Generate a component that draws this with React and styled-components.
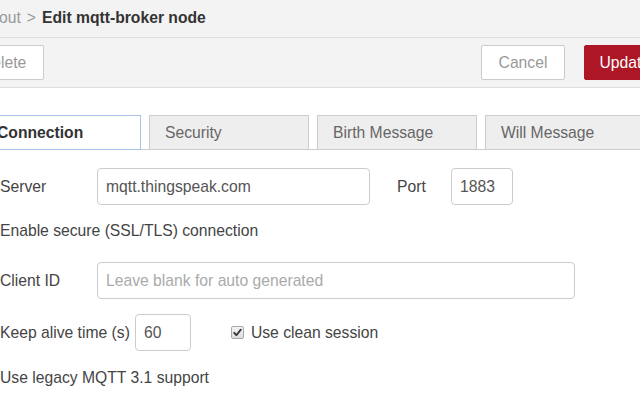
import React from 'react';
import styled, { createGlobalStyle } from 'styled-components';

const GlobalStyle = createGlobalStyle`
    html, body {
        margin: 0;
        padding: 0;
        background: #ffffff;
    }
    body {
        width: 640px;
        height: 400px;
        overflow: hidden;
        font-family: "Liberation Sans", Arial, Helvetica, sans-serif;
        font-size: 15.7px;
        color: #444;
    }
`;

const Tray = styled.div`
    width: 640px;
    height: 400px;
    overflow: hidden;
    display: flex;
    flex-direction: column;
`;

const Header = styled.div`
    height: 38px;
    flex-shrink: 0;
    background: #f3f3f3;
    border-bottom: 1px solid #dddddd;
    display: flex;
    align-items: center;
    padding-bottom: 1px;
    box-sizing: border-box;
    white-space: nowrap;
`;

const Crumb = styled.span`
    color: #999999;
    margin-left: -1px;
`;

const Sep = styled.span`
    color: #999999;
    margin: 0 6px 0 6px;
`;

const Title = styled.span`
    font-weight: bold;
    color: #333333;
`;

const Toolbar = styled.div`
    height: 50px;
    flex-shrink: 0;
    background: #f3f3f3;
    border-bottom: 1px solid #dddddd;
    box-sizing: border-box;
    display: flex;
    align-items: center;
`;

const Spacer = styled.div`
    flex: 1;
`;

const Button = styled.button`
    height: 35px;
    padding: 0 17px 0 ${(p) => (p.$primary ? 14 : 17)}px;
    font-family: inherit;
    font-size: 15.7px;
    border-radius: 2px;
    border: 1px solid ${(p) => (p.$primary ? '#ad1625' : '#cccccc')};
    background: ${(p) => (p.$primary ? '#ad1625' : '#ffffff')};
    color: ${(p) => (p.$primary ? '#ffffff' : '#999999')};
    margin-left: ${(p) => p.$ml || 0}px;
    margin-right: ${(p) => p.$mr || 0}px;
    flex-shrink: 0;
    white-space: nowrap;
`;

const Body = styled.div`
    padding-top: 27px;
`;

const TabBar = styled.div`
    display: flex;
    gap: 8px;
    margin-left: -19px;
    border-bottom: 1px solid #cccccc;
    white-space: nowrap;
`;

const Tab = styled.div`
    width: 160px;
    flex-shrink: 0;
    height: 35px;
    box-sizing: border-box;
    display: flex;
    align-items: center;
    padding-left: 15px;
    padding-top: 1px;
    font-size: 15.7px;
    margin-bottom: -1px;
    background: ${(p) => (p.$active ? '#ffffff' : '#eeeeee')};
    border: 1px solid ${(p) => (p.$active ? '#a9c2ea' : '#cccccc')};
    color: ${(p) => (p.$active ? '#333333' : '#666666')};
    font-weight: ${(p) => (p.$active ? 'bold' : 'normal')};
`;

const Form = styled.div`
    display: flex;
    flex-direction: column;
`;

const Row = styled.div`
    display: flex;
    align-items: center;
    height: ${(p) => p.$h}px;
    margin-top: ${(p) => p.$mt}px;
    white-space: nowrap;
`;

const Label = styled.label`
    width: ${(p) => (p.$w ? `${p.$w}px` : 'auto')};
    flex-shrink: 0;
    color: #444444;
    margin-left: ${(p) => p.$ml || 0}px;
`;

const Input = styled.input`
    width: ${(p) => p.$w}px;
    height: 37px;
    box-sizing: border-box;
    border: 1px solid #cccccc;
    border-radius: 4px;
    padding: 0 8px;
    font-family: inherit;
    font-size: 15.7px;
    color: #555555;
    background: #ffffff;
    outline: none;
    flex-shrink: 0;
    margin-left: ${(p) => p.$ml || 0}px;
    &::placeholder {
        color: #aaaaaa;
    }
`;

const Check = styled.span`
    width: 13px;
    height: 13px;
    box-sizing: border-box;
    border: 1px solid #a8a8a8;
    border-radius: 2px;
    background: linear-gradient(#f4f4f4, #dcdcdc);
    display: inline-flex;
    align-items: center;
    justify-content: center;
    flex-shrink: 0;
    margin-left: ${(p) => p.$ml || 0}px;
    margin-right: 7px;
`;

function CheckBox({ checked, ml }) {
    return (
        <Check $ml={ml}>
            {checked && (
                <svg width="9" height="9" viewBox="0 0 9 9">
                    <path d="M1.2 4.8 L3.4 7.2 L7.8 1.6" fill="none" stroke="#333" strokeWidth="1.8" strokeLinecap="round" strokeLinejoin="round" />
                </svg>
            )}
        </Check>
    );
}

export default function App() {
    return (
        <>
            <GlobalStyle />
            <Tray>
                <Header>
                    <Crumb>out</Crumb>
                    <Sep>&gt;</Sep>
                    <Title>Edit mqtt-broker node</Title>
                </Header>

                <Toolbar>
                    <Button $ml={-37}>Delete</Button>
                    <Spacer />
                    <Button>Cancel</Button>
                    <Button $primary $ml={19} $mr={-28}>Update</Button>
                </Toolbar>

                <Body>
                    <TabBar>
                        <Tab $active>Connection</Tab>
                        <Tab>Security</Tab>
                        <Tab>Birth Message</Tab>
                        <Tab>Will Message</Tab>
                    </TabBar>

                    <Form>
                        <Row $h={37} $mt={18}>
                            <Label $w={97}>Server</Label>
                            <Input $w={273} defaultValue="mqtt.thingspeak.com" />
                            <Label $w={54} $ml={27}>Port</Label>
                            <Input $w={62} defaultValue="1883" />
                        </Row>

                        <Row $h={20} $mt={16}>
                            <CheckBox ml={-20} />
                            <Label>Enable secure (SSL/TLS) connection</Label>
                        </Row>

                        <Row $h={37} $mt={21}>
                            <Label $w={97}>Client ID</Label>
                            <Input $w={478} placeholder="Leave blank for auto generated" />
                        </Row>

                        <Row $h={37} $mt={15}>
                            <Label>Keep alive time (s)</Label>
                            <Input $w={56} $ml={5} defaultValue="60" />
                            <CheckBox checked ml={40} />
                            <Label>Use clean session</Label>
                        </Row>

                        <Row $h={20} $mt={17}>
                            <CheckBox ml={-20} />
                            <Label>Use legacy MQTT 3.1 support</Label>
                        </Row>
                    </Form>
                </Body>
            </Tray>
        </>
    );
}
